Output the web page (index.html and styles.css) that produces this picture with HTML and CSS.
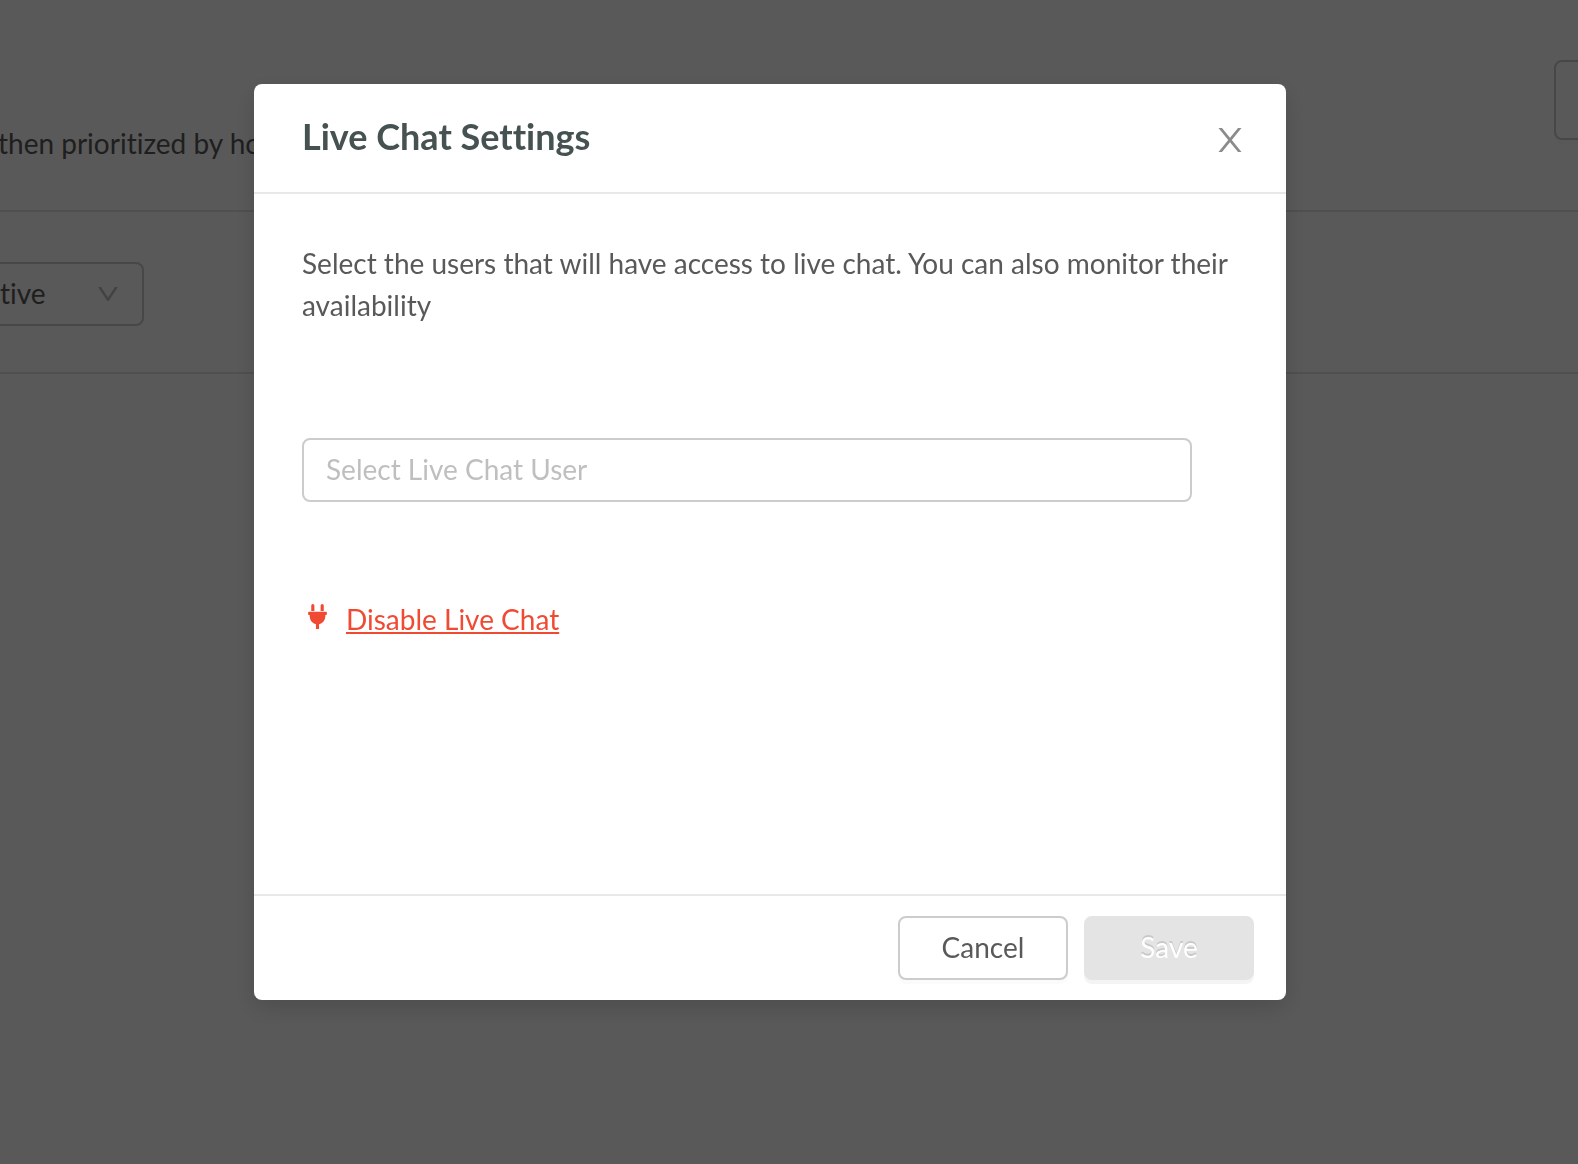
FILE: index.html
```html
<!DOCTYPE html>
<html lang="en">
<head>
<meta charset="utf-8">
<meta name="viewport" content="width=device-width, initial-scale=1">
<title>Live Chat Settings</title>
<link rel="stylesheet" href="styles.css">
</head>
<body>
<div class="page" inert>
  <header class="page-header">
    <p class="page-text">then prioritized by how</p>
    <button class="page-action" type="button" aria-label="Page action"></button>
  </header>
  <div class="filters">
    <div class="select">
      <select class="select-field" aria-label="Status"><option>Active</option></select>
      <svg class="select-arrow" viewBox="0 0 20 14" aria-hidden="true"><path d="M0 0H3L10 10.600L17 0H20L11 13.600Q10 14.600 9 13.600Z"/></svg>
    </div>
  </div>
</div>
<div class="overlay">
  <section class="modal" role="dialog" aria-modal="true" aria-labelledby="modal-title">
    <header class="modal-header">
      <h1 class="modal-title" id="modal-title">Live Chat Settings</h1>
      <button class="close" type="button" aria-label="Close">
        <svg class="close-icon" viewBox="0 0 24 24" aria-hidden="true"><path d="M.5 0H4L12 9.700L20 0H23.500L13.800 12L23.500 24H20L12 14.300L4 24H.5L10.200 12Z"/></svg>
      </button>
    </header>
    <div class="modal-body">
      <p class="description">Select the users that will have access to live chat. You can also monitor their availability</p>
      <input class="user-input" type="text" placeholder="Select Live Chat User" aria-label="Select Live Chat User">
      <div class="disable">
        <svg class="plug" viewBox="0 0 384 512" aria-hidden="true"><path d="M320 32a32 32 0 0 0-64 0v112h64ZM368 160H16A16 16 0 0 0 0 176v32a16 16 0 0 0 16 16H32v32A160 160 0 0 0 160 412.800V512h64V412.800A160 160 0 0 0 352 256V224h16a16 16 0 0 0 16-16V176A16 16 0 0 0 368 160ZM128 32a32 32 0 0 0-64 0v112h64Z"/></svg>
        <a class="disable-link" href="#">Disable Live Chat</a>
      </div>
    </div>
    <footer class="modal-footer">
      <button class="button" type="button">Cancel</button>
      <button class="button button-primary" type="button" disabled>Save</button>
    </footer>
  </section>
</div>
</body>
</html>
```
FILE: styles.css
```css
* {
  box-sizing: border-box;
}

body {
  margin: 0;
  min-height: 100vh;
  overflow-x: hidden;
  background: #fff;
  color: #595959;
  font-family: Lato, "Open Sans", sans-serif;
  font-size: 28px;
  line-height: 42px;
  font-variant-ligatures: none;
}

h1,
p {
  margin: 0;
}

button,
input,
select {
  font: inherit;
  font-variant-ligatures: none;
  color: inherit;
}

/* Page behind the dialog */
.page {
  overflow: hidden;
}

.page-header {
  display: flex;
  align-items: center;
  justify-content: space-between;
  height: 212px;
  padding-bottom: 10px;
  border-bottom: 2px solid #e4e4e4;
}

.page-text {
  margin-left: -2px;
  padding-top: 86px;
}

.page-action {
  width: 80px;
  height: 80px;
  margin-right: -56px;
  border: 2px solid #ccc;
  border-radius: 8px;
  background: #fff;
  box-shadow: 0 4px 0 rgba(0, 0, 0, 0.015);
}

.filters {
  display: flex;
  padding: 50px 0 46px;
  border-bottom: 2px solid #e4e4e4;
}

.select {
  position: relative;
  width: 200px;
  margin-left: -56px;
}

.select-field {
  display: block;
  width: 100%;
  height: 64px;
  padding: 0 22px 2px;
  border: 2px solid #ccc;
  border-radius: 8px;
  background: #fff;
  appearance: none;
  opacity: 1;
}

.select-arrow {
  position: absolute;
  top: 25px;
  right: 26px;
  width: 20px;
  height: 14px;
  fill: #bfbfbf;
}

/* Dialog */
.overlay {
  position: fixed;
  inset: 0;
  display: flex;
  align-items: flex-start;
  justify-content: center;
  padding: 84px 38px 0 0;
  overflow: auto;
  background: rgba(0, 0, 0, 0.65);
}

.modal {
  width: 100%;
  max-width: 1032px;
  border-radius: 8px;
  background: #fff;
  box-shadow: 0 8px 24px rgba(0, 0, 0, 0.15);
}

.modal-header {
  display: flex;
  align-items: center;
  justify-content: space-between;
  padding: 24px 44px 28px 48px;
  border-bottom: 2px solid #e8e8e8;
}

.modal-title {
  color: #465251;
  font-size: 36px;
  font-weight: 700;
  line-height: 56px;
}

.close {
  display: flex;
  padding: 8px 0 0;
  border: 0;
  background: none;
}

.close-icon {
  width: 24px;
  height: 24px;
  fill: #8c8c8c;
}

.modal-body {
  min-height: 700px;
  padding: 48px;
}

.user-input {
  display: block;
  width: calc(100% - 46px);
  height: 64px;
  margin: 112px 0 96px;
  padding: 0 22px 2px;
  border: 2px solid #ccc;
  border-radius: 8px;
  background: #fff;
}

.user-input::placeholder {
  color: #bfbfbf;
  opacity: 1;
}

.disable {
  display: flex;
  gap: 19px;
  padding-left: 6px;
  color: #f04b32;
}

.plug {
  width: 19px;
  height: 25px;
  margin-top: 6px;
  fill: currentColor;
}

.disable-link {
  color: inherit;
  text-decoration-thickness: 2px;
  text-underline-offset: 2px;
}

.modal-footer {
  display: flex;
  justify-content: flex-end;
  gap: 16px;
  padding: 20px 32px;
  border-top: 2px solid #e8e8e8;
}

.button {
  width: 170px;
  height: 64px;
  padding: 0 0 2px;
  border: 2px solid #ccc;
  border-radius: 8px;
  background: #fff;
  box-shadow: 0 4px 0 rgba(0, 0, 0, 0.015);
}

.button-primary {
  border-color: #e4e4e4;
  background: #e4e4e4;
  color: #fff;
  text-shadow: 0 -2px 0 rgba(0, 0, 0, 0.12);
  box-shadow: 0 4px 0 rgba(0, 0, 0, 0.045);
}
```
